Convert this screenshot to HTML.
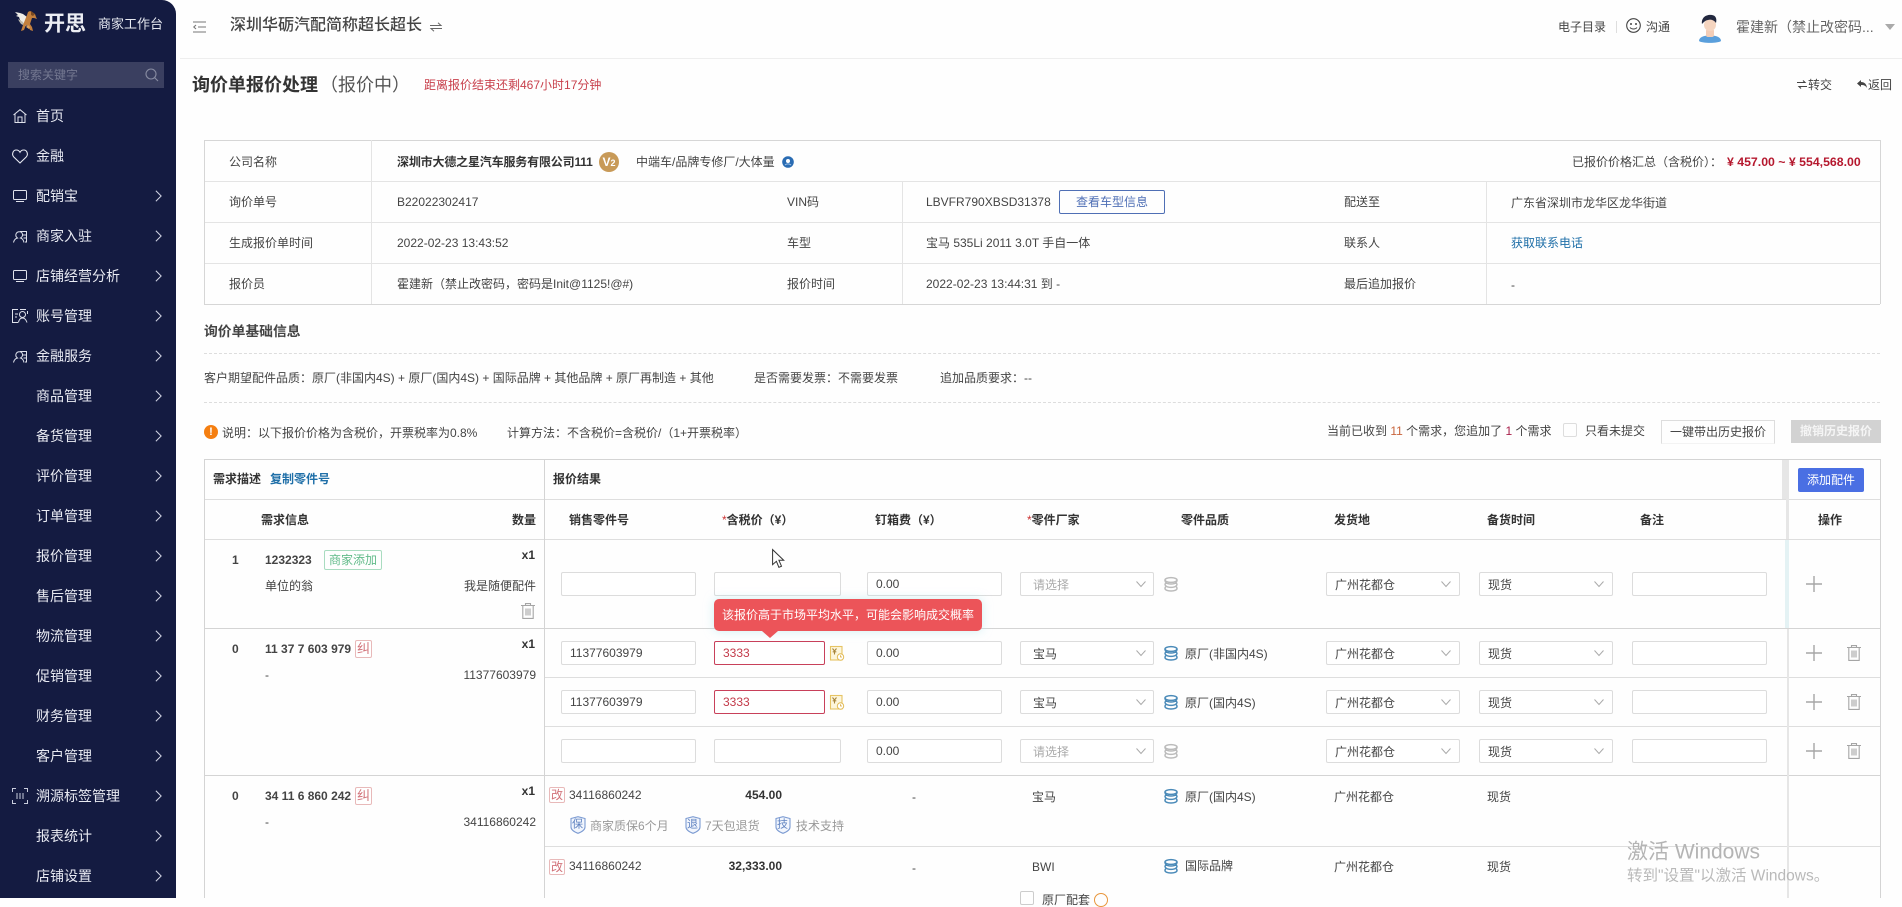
<!DOCTYPE html>
<html lang="zh-CN"><head><meta charset="utf-8"><title>询价单报价处理</title>
<style>
html,body{margin:0;padding:0;width:1902px;height:898px;overflow:hidden;background:#fefefe;font-family:"Liberation Sans","Noto Sans CJK SC",sans-serif;font-size:12px;color:#444}
.t{position:absolute;line-height:1;white-space:nowrap;transform:translateY(-50%)}
.b{font-weight:700;color:#333}
.h{position:absolute;height:1px;background:#dedede}
.v{position:absolute;width:1px;background:#dedede}
.i{position:absolute;box-sizing:border-box;height:24px;border:1px solid #dcdcdc;border-radius:2px;background:#fff}
.r{border-color:#c8405a;width:111px}
.m{position:absolute;left:36px;font-size:14px;line-height:1;color:#e8eaf2;transform:translateY(-50%);white-space:nowrap}
svg{position:absolute;overflow:visible}
.tg{position:absolute;box-sizing:border-box;border:1px solid #e8b9b9;color:#d2737a;border-radius:2px;text-align:center;font-size:13px;line-height:16px;width:17px;height:18px;background:#fff}
.th{font-weight:700;color:#333}
.s{color:#c33a4a}
</style></head><body>
<svg width="0" height="0" style="position:absolute"><defs>
<symbol id="ch" viewBox="0 0 8 14" overflow="visible"><path d="M1 1l6 6-6 6" fill="none" stroke="#cfd2e2" stroke-width="1.2"/></symbol>
<symbol id="dn" viewBox="0 0 10 6" overflow="visible"><path d="M.5.5L5 5.5 9.500.5" fill="none" stroke="#aaa" stroke-width="1"/></symbol>
<symbol id="db" viewBox="0 0 14 15" overflow="visible"><g fill="none" stroke-width="1.500"><ellipse cx="7" cy="3" rx="6" ry="2.400"/><path d="M1 3c0 .9.3 2 1.200 2.800C1.300 6.500 1 7 1 7.500s.3 1 1.200 1.700C1.300 9.900 1 10.500 1 11.500 1 13 3.700 14 7 14s6-1 6-2.500c0-1-.3-1.600-1.200-2.300.9-.7 1.200-1.200 1.200-1.700s-.3-1-1.200-1.700C12.700 5 13 3.900 13 3M2.200 5.800C3.300 6.600 5 7 7 7s3.700-.4 4.800-1.200M2.200 9.200C3.300 10 5 10.400 7 10.400s3.700-.4 4.800-1.200"/></g></symbol>
<symbol id="pl" viewBox="0 0 16 16" overflow="visible"><path d="M8 0v16M0 8h16" stroke="#a5a5a5" stroke-width="1.400" fill="none"/></symbol>
<symbol id="tr" viewBox="0 0 14 16" overflow="visible"><path d="M0 2.500h14M4.500 2.500V.6h5v1.900M1.800 2.500V15.400h10.400V2.500M5 5.500v7M7 5.500v7M9 5.500v7" fill="none" stroke="#a5a5a5" stroke-width="1.100"/></symbol>
<symbol id="yn" viewBox="0 0 14 15" overflow="visible"><rect x=".5" y=".5" width="11.500" height="13.500" fill="#fdf6dc" stroke="#e6c464" stroke-width="1.100"/><path d="M2.500 2.500l2 2.500 2-2.500M4.500 5v3.500M2.700 5.800h3.600" fill="none" stroke="#a8853a" stroke-width="1.100"/><circle cx="10.500" cy="11" r="3.200" fill="#fff" stroke="#e3bc55"/><path d="M10.500 9.200V11h1.500" fill="none" stroke="#d9a93c" stroke-width=".8"/></symbol>
<symbol id="sh" viewBox="0 0 16 18" overflow="visible"><path d="M1 2.500L8 .7l7 1.800v8.500c0 3-3.500 5-7 6.300-3.500-1.300-7-3.300-7-6.300z" fill="#f2f6fd" stroke="#7c9bd2" stroke-width="1.100"/></symbol>
<symbol id="pp" viewBox="0 0 14 13" overflow="visible"><path d="M.5 12.500C1 10 2.500 8.500 4.500 8 3 7 2.500 5.500 3 4c.5-1.500 2-2.300 3.500-2.300S9.300 2.800 9.500 4.300C9.700 6 9 7.200 7.500 8c1.600.5 3 1.800 3.500 4.500M7 1.500h6.500v10.500h-1.500M10 5h3M10.500 8h3" fill="none" stroke="#dfe2ec" stroke-width="1"/></symbol>
</defs></svg>

<!-- SIDEBAR -->
<div style="position:absolute;left:0;top:0;width:176px;height:898px;background:#141b41;border-top-right-radius:14px"></div>
<svg style="left:14px;top:10px" width="24" height="27" viewBox="0 0 24 27">
<path d="M1 2l5 1 3 1 4 3 1 6-2 3-4-4-2-2-1-3-3-1 2-1z" fill="#f0eee8"/><path d="M4 9l5 3 2 4-4-2-2-3z" fill="#bdb9ae"/>
<path d="M16 1l2 1 3 2 1 3 1 2-3-1-2 0-1 3-1 3 2 3 1 4-3-1-2-4-2-1-2 5-3 1 2-6 2-5 2-5 1-3z" fill="#c4803d"/><path d="M17 1l4 3-2 2-2-1z" fill="#7a4a22"/><path d="M14 15l2 2-1 2-3-2z" fill="#e0a45e"/>
</svg>
<div class="t" style="left:44px;top:24px;font-size:21px;font-weight:700;color:#eceef4">开思</div>
<div class="t" style="left:98px;top:23.500px;font-size:13px;color:#e6e8f0">商家工作台</div>
<div style="position:absolute;left:8px;top:62px;width:156px;height:26px;background:#3a3f60"></div>
<div class="t" style="left:18px;top:75px;color:#747891">搜索关键字</div>
<svg style="left:145px;top:68px" width="14" height="14" viewBox="0 0 14 14"><circle cx="6" cy="6" r="5" fill="none" stroke="#888ca2" stroke-width="1.100"/><path d="M9.500 9.500L13 13" stroke="#888ca2" stroke-width="1.100"/></svg>

<div class="m" style="top:116px">首页</div>
<svg style="left:13px;top:109px" width="14" height="14" viewBox="0 0 14 14"><path d="M.5 6L7 .7 13.500 6M2 5v8.500h10V5M5 13.500V8h4v5.500" fill="none" stroke="#dfe2ec"/></svg>
<div class="m" style="top:156px">金融</div>
<svg style="left:12px;top:149px" width="16" height="15" viewBox="0 0 16 15"><path d="M8 14L1.800 8C-.5 5.600.8 1 4.300 1 6 1 7.300 2 8 3.300 8.700 2 10 1 11.700 1c3.500 0 4.800 4.600 2.500 7z" fill="none" stroke="#e6e8f0" stroke-width="1.100"/></svg>
<div class="m" style="top:196px">配销宝</div>
<svg style="left:13px;top:190px" width="14" height="12" viewBox="0 0 14 12"><rect x=".5" y=".5" width="13" height="9" rx="1" fill="none" stroke="#dfe2ec"/><path d="M3 11.500h8" stroke="#dfe2ec"/></svg>
<div class="m" style="top:236px">商家入驻</div>
<svg style="left:13px;top:230px" width="14" height="13"><use href="#pp" width="14" height="13"/></svg>
<div class="m" style="top:276px">店铺经营分析</div>
<svg style="left:13px;top:270px" width="14" height="12" viewBox="0 0 14 12"><rect x=".5" y=".5" width="13" height="9" rx="1" fill="none" stroke="#dfe2ec"/><path d="M3 11.500h8" stroke="#dfe2ec"/></svg>
<div class="m" style="top:316px">账号管理</div>
<svg style="left:12px;top:309px" width="16" height="14" viewBox="0 0 16 14"><path d="M6 .5H.5v13H6M3 5h3M3 8h2" fill="none" stroke="#dfe2ec"/><path d="M14 .5H8M15.500 2v3" fill="none" stroke="#dfe2ec"/><circle cx="10.500" cy="5.500" r="3" fill="none" stroke="#dfe2ec"/><path d="M6.500 13.500c.5-3 2-4.500 4-4.500s3.500 1.500 4.500 4.500" fill="none" stroke="#dfe2ec"/></svg>
<div class="m" style="top:356px">金融服务</div>
<svg style="left:13px;top:350px" width="14" height="13"><use href="#pp" width="14" height="13"/></svg>
<div class="m" style="top:396px">商品管理</div>
<div class="m" style="top:436px">备货管理</div>
<div class="m" style="top:476px">评价管理</div>
<div class="m" style="top:516px">订单管理</div>
<div class="m" style="top:556px">报价管理</div>
<div class="m" style="top:596px">售后管理</div>
<div class="m" style="top:636px">物流管理</div>
<div class="m" style="top:676px">促销管理</div>
<div class="m" style="top:716px">财务管理</div>
<div class="m" style="top:756px">客户管理</div>
<div class="m" style="top:796px">溯源标签管理</div>
<svg style="left:12px;top:788px" width="16" height="16" viewBox="0 0 16 16"><path d="M4 .5H.5V4M12 .5h3.500V4M.5 12v3.500H4M15.500 12v3.500H12M5 5v6M8 5v6M11 5v6" fill="none" stroke="#c9cddd"/></svg>
<div class="m" style="top:836px">报表统计</div>
<div class="m" style="top:876px">店铺设置</div>
<svg style="left:155px;top:189px" width="7" height="14"><use href="#ch" width="7" height="14"/></svg>
<svg style="left:155px;top:229px" width="7" height="14"><use href="#ch" width="7" height="14"/></svg>
<svg style="left:155px;top:269px" width="7" height="14"><use href="#ch" width="7" height="14"/></svg>
<svg style="left:155px;top:309px" width="7" height="14"><use href="#ch" width="7" height="14"/></svg>
<svg style="left:155px;top:349px" width="7" height="14"><use href="#ch" width="7" height="14"/></svg>
<svg style="left:155px;top:389px" width="7" height="14"><use href="#ch" width="7" height="14"/></svg>
<svg style="left:155px;top:429px" width="7" height="14"><use href="#ch" width="7" height="14"/></svg>
<svg style="left:155px;top:469px" width="7" height="14"><use href="#ch" width="7" height="14"/></svg>
<svg style="left:155px;top:509px" width="7" height="14"><use href="#ch" width="7" height="14"/></svg>
<svg style="left:155px;top:549px" width="7" height="14"><use href="#ch" width="7" height="14"/></svg>
<svg style="left:155px;top:589px" width="7" height="14"><use href="#ch" width="7" height="14"/></svg>
<svg style="left:155px;top:629px" width="7" height="14"><use href="#ch" width="7" height="14"/></svg>
<svg style="left:155px;top:669px" width="7" height="14"><use href="#ch" width="7" height="14"/></svg>
<svg style="left:155px;top:709px" width="7" height="14"><use href="#ch" width="7" height="14"/></svg>
<svg style="left:155px;top:749px" width="7" height="14"><use href="#ch" width="7" height="14"/></svg>
<svg style="left:155px;top:789px" width="7" height="14"><use href="#ch" width="7" height="14"/></svg>
<svg style="left:155px;top:829px" width="7" height="14"><use href="#ch" width="7" height="14"/></svg>
<svg style="left:155px;top:869px" width="7" height="14"><use href="#ch" width="7" height="14"/></svg>

<!-- TOP BAR -->
<div class="h" style="left:180px;top:58px;width:1722px;background:#eee"></div>
<svg style="left:193px;top:21px" width="13" height="12" viewBox="0 0 13 12"><path d="M0 1h13M5 6h8M0 11h13M3 4L0.800 6 3 8" fill="none" stroke="#777" stroke-width="1.100"/></svg>
<div class="t" style="left:230px;top:26px;font-size:16px;font-weight:500;color:#444">深圳华砺汽配简称超长超长</div>
<svg style="left:430px;top:22px" width="12" height="10" viewBox="0 0 12 10"><path d="M0 3.500h11L8 .8M12 6.500H1L4 9.200" fill="none" stroke="#666"/></svg>
<div class="t" style="left:1558px;top:27px;color:#444">电子目录</div>
<div class="v" style="left:1616px;top:21px;height:12px"></div>
<svg style="left:1626px;top:18px" width="15" height="15" viewBox="0 0 15 15"><circle cx="7.500" cy="7.500" r="6.800" fill="none" stroke="#444" stroke-width="1.100"/><circle cx="5" cy="6" r="1" fill="#444"/><circle cx="10" cy="6" r="1" fill="#444"/><path d="M4 9.500c1.500 2 5.500 2 7 0" fill="none" stroke="#444"/></svg>
<div class="t" style="left:1646px;top:27px;color:#444">沟通</div>
<svg style="left:1698px;top:14px" width="24" height="30" viewBox="0 0 24 30"><path d="M1 27c0-4 5-5.500 11-5.500S23 23 23 27c-3 2.500-19 2.500-22 0z" fill="#5a9fdc"/><rect x="8" y="15" width="8" height="8" rx="2" fill="#f3cdb7"/><circle cx="12" cy="11" r="6" fill="#f5d5c0"/><path d="M4 10C3 3 9 0 14 1c4 .5 5 4 4 8-2-3-5-4-8-3-3 .5-4 2-6 4z" fill="#22283f"/></svg>
<div class="t" style="left:1736px;top:27px;font-size:14px;color:#666">霍建新（禁止改密码...</div>
<div style="position:absolute;left:1885px;top:24px;width:0;height:0;border:5px solid transparent;border-top:6px solid #aaa"></div>

<!-- TITLE -->
<div class="t" style="left:192px;top:85px;font-size:18px;font-weight:700;color:#333">询价单报价处理</div>
<div class="t" style="left:320px;top:85px;font-size:18px;color:#555">（报价中）</div>
<div class="t" style="left:424px;top:85px;color:#c8404c">距离报价结束还剩467小时17分钟</div>
<svg style="left:1797px;top:80px" width="10" height="9" viewBox="0 0 10 9"><path d="M0 2.500h8L6 .5M10 6.500H2L4 8.500" fill="none" stroke="#444" stroke-width="1.100"/></svg>
<div class="t" style="left:1808px;top:85px;color:#444">转交</div>
<svg style="left:1857px;top:80px" width="10" height="9" viewBox="0 0 10 9"><path d="M4 0L0 3.500 4 7V5c3 0 4.500.5 6 3C9.500 4 7.500 2 4 2z" fill="#444"/></svg>
<div class="t" style="left:1868px;top:85px;color:#444">返回</div>

<!-- INFO TABLE -->
<div class="h" style="left:204px;top:140px;width:1676px;background:#d6d6d6"></div>
<div class="h" style="left:204px;top:181px;width:1676px;background:#e4e4e4"></div>
<div class="h" style="left:204px;top:222px;width:1676px;background:#e4e4e4"></div>
<div class="h" style="left:204px;top:263px;width:1676px;background:#e4e4e4"></div>
<div class="h" style="left:204px;top:304px;width:1676px;background:#d6d6d6"></div>
<div class="v" style="left:204px;top:140px;height:164px;background:#d6d6d6"></div>
<div class="v" style="left:1880px;top:140px;height:164px;background:#d6d6d6"></div>
<div class="v" style="left:371px;top:140px;height:164px;background:#e4e4e4"></div>
<div class="v" style="left:902px;top:181px;height:123px;background:#e4e4e4"></div>
<div class="v" style="left:1486px;top:181px;height:123px;background:#e4e4e4"></div>

<div class="t" style="left:229px;top:161.500px">公司名称</div>
<div class="t b" style="left:397px;top:161.500px;letter-spacing:-.17px">深圳市大德之星汽车服务有限公司111</div>
<div style="position:absolute;left:599px;top:152px;width:20px;height:20px;border-radius:50%;background:#c89a58;color:#fff;text-align:center;font:700 12px/20px 'Liberation Sans',sans-serif">V<span style="font-size:9px">2</span></div>
<div class="t" style="left:636px;top:162px">中端车/品牌专修厂/大体量</div>
<svg style="left:782px;top:156px" width="12" height="12" viewBox="0 0 12 12"><circle cx="6" cy="6" r="5.800" fill="#2a6cb3"/><circle cx="6" cy="5" r="2" fill="#fff"/><path d="M3 9c1.500-1.500 4.500-1.500 6 0" stroke="#9fc4ea" fill="none"/></svg>
<div class="t" style="left:1572px;top:161.500px">已报价价格汇总（含税价）：</div>
<div class="t" style="left:1727px;top:161.500px;font-weight:700;color:#b5182e;font-size:12.300px">¥ 457.00 ~ ¥ 554,568.00</div>

<div class="t" style="left:229px;top:202px">询价单号</div>
<div class="t" style="left:397px;top:202px">B22022302417</div>
<div class="t" style="left:787px;top:202px">VIN码</div>
<div class="t" style="left:926px;top:202px">LBVFR790XBSD31378</div>
<div style="position:absolute;box-sizing:border-box;left:1059px;top:190px;width:106px;height:24px;border:1px solid #4f6fb5;border-radius:2px;text-align:center;line-height:22px;color:#4f6fb5">查看车型信息</div>
<div class="t" style="left:1344px;top:202px">配送至</div>
<div class="t" style="left:1511px;top:202.500px">广东省深圳市龙华区龙华街道</div>

<div class="t" style="left:229px;top:243px">生成报价单时间</div>
<div class="t" style="left:397px;top:243px">2022-02-23 13:43:52</div>
<div class="t" style="left:787px;top:243px">车型</div>
<div class="t" style="left:926px;top:243px">宝马 535Li 2011 3.0T 手自一体</div>
<div class="t" style="left:1344px;top:243px">联系人</div>
<div class="t" style="left:1511px;top:243px;color:#1f6fa8">获取联系电话</div>

<div class="t" style="left:229px;top:284px">报价员</div>
<div class="t" style="left:397px;top:284px">霍建新（禁止改密码，密码是Init@1125!@#)</div>
<div class="t" style="left:787px;top:284px">报价时间</div>
<div class="t" style="left:926px;top:284px">2022-02-23 13:44:31 到 -</div>
<div class="t" style="left:1344px;top:284px">最后追加报价</div>
<div class="t" style="left:1511px;top:285px">-</div>

<!-- BASIC INFO -->
<div class="t" style="left:204px;top:332px;font-weight:700;color:#444;font-size:13.800px">询价单基础信息</div>
<div style="position:absolute;left:204px;top:353px;width:1676px;border-top:1px dashed #ddd"></div>
<div class="t" style="left:204px;top:378px">客户期望配件品质：原厂(非国内4S) + 原厂(国内4S) + 国际品牌 + 其他品牌 + 原厂再制造 + 其他</div>
<div class="t" style="left:754px;top:378px">是否需要发票：不需要发票</div>
<div class="t" style="left:940px;top:378px">追加品质要求：--</div>
<div style="position:absolute;left:204px;top:402px;width:1676px;border-top:1px dashed #ddd"></div>

<div style="position:absolute;left:204px;top:425px;width:14px;height:14px;border-radius:50%;background:#f57f11;color:#fff;text-align:center;font:700 11px/14px 'Liberation Sans',sans-serif">!</div>
<div class="t" style="left:222px;top:432.500px">说明：以下报价价格为含税价，开票税率为0.8%</div>
<div class="t" style="left:507px;top:432.500px">计算方法：不含税价=含税价/（1+开票税率）</div>
<div class="t" style="left:1327px;top:431px">当前已收到 <span style="color:#c8643c">11</span> 个需求，您追加了 <span style="color:#a81f4a">1</span> 个需求</div>
<div style="position:absolute;box-sizing:border-box;left:1563px;top:423px;width:14px;height:14px;border:1px solid #ddd;border-radius:2px"></div>
<div class="t" style="left:1585px;top:431px">只看未提交</div>
<div style="position:absolute;box-sizing:border-box;left:1661px;top:420px;width:114px;height:24px;border:1px solid #ddd;border-bottom-color:#f3f3f3;text-align:center;line-height:23px;color:#444">一键带出历史报价</div>
<div style="position:absolute;left:1791px;top:420px;width:90px;height:23px;background:#d2d2d2;text-align:center;line-height:23px;color:#f5f5f5;font-weight:700">撤销历史报价</div>

<!-- MAIN TABLE LINES -->
<div class="h" style="left:204px;top:459px;width:1677px;background:#d4d4d4"></div>
<div class="h" style="left:204px;top:499px;width:1677px"></div>
<div class="h" style="left:204px;top:539px;width:1677px"></div>
<div class="h" style="left:204px;top:628px;width:1677px;background:#d4d4d4"></div>
<div class="h" style="left:544px;top:677px;width:1337px"></div>
<div class="h" style="left:544px;top:726px;width:1337px"></div>
<div class="h" style="left:204px;top:775px;width:1677px;background:#d4d4d4"></div>
<div class="h" style="left:544px;top:846px;width:1337px"></div>
<div class="v" style="left:204px;top:459px;height:439px;background:#d4d4d4"></div>
<div class="v" style="left:544px;top:459px;height:439px;background:#d4d4d4"></div>
<div class="v" style="left:1880px;top:459px;height:439px;background:#d4d4d4"></div>
<div style="position:absolute;left:1782px;top:460px;width:7px;height:39px;background:#e6e6e6"></div>
<div style="position:absolute;left:1786px;top:499px;width:3px;height:40px;background:#e6e6e6"></div>
<div style="position:absolute;left:1785px;top:540px;width:4px;height:88px;background:#e4f2f4"></div>
<div style="position:absolute;left:1787px;top:629px;width:2px;height:269px;background:#e6e6e6"></div>

<!-- HEADERS -->
<div class="t th" style="left:213px;top:479px">需求描述</div>
<div class="t" style="left:270px;top:479px;color:#1f6fa8;font-weight:700">复制零件号</div>
<div class="t th" style="left:553px;top:479px">报价结果</div>
<div style="position:absolute;left:1798px;top:468px;width:66px;height:24px;background:#4a6fe3;border-radius:2px;color:#fff;text-align:center;line-height:24px;font-size:12px">添加配件</div>
<div class="t th" style="left:261px;top:519.500px">需求信息</div>
<div class="t th" style="left:512px;top:519.500px">数量</div>
<div class="t th" style="left:569px;top:519.500px">销售零件号</div>
<div class="t th" style="left:722px;top:519.500px"><span style="color:#c33;font-weight:400">*</span>含税价（¥）</div>
<div class="t th" style="left:875px;top:519.500px">钉箱费（¥）</div>
<div class="t th" style="left:1027px;top:519.500px"><span style="color:#c33;font-weight:400">*</span>零件厂家</div>
<div class="t th" style="left:1181px;top:519.500px">零件品质</div>
<div class="t th" style="left:1334px;top:519.500px">发货地</div>
<div class="t th" style="left:1487px;top:519.500px">备货时间</div>
<div class="t th" style="left:1640px;top:519.500px">备注</div>
<div class="t th" style="left:1818px;top:519.500px">操作</div>

<!-- LEFT ROWS -->
<div class="t b" style="left:232px;top:560px;color:#444">1</div>
<div class="t b" style="left:265px;top:560px;color:#444">1232323</div>
<div style="position:absolute;box-sizing:border-box;left:324px;top:550px;width:58px;height:20px;border:1px solid #a9dcc0;border-radius:2px;color:#62bb8a;text-align:center;line-height:19px">商家添加</div>
<div class="t b" style="right:1367px;top:555px">x1</div>
<div class="t" style="left:265px;top:586px">单位的翁</div>
<div class="t" style="right:1366px;top:586px">我是随便配件</div>
<svg style="left:521px;top:603px" width="14" height="16"><use href="#tr" width="14" height="16"/></svg>

<div class="t b" style="left:232px;top:649px;color:#444">0</div>
<div class="t b" style="left:265px;top:649px;color:#444">11 37 7 603 979</div>
<div class="tg" style="left:355px;top:640px">纠</div>
<div class="t b" style="right:1367px;top:644px">x1</div>
<div class="t" style="left:265px;top:675px">-</div>
<div class="t" style="right:1366px;top:675px">11377603979</div>

<div class="t b" style="left:232px;top:796px;color:#444">0</div>
<div class="t b" style="left:265px;top:796px;color:#444">34 11 6 860 242</div>
<div class="tg" style="left:355px;top:787px">纠</div>
<div class="t b" style="right:1367px;top:791px">x1</div>
<div class="t" style="left:265px;top:822px">-</div>
<div class="t" style="right:1366px;top:822px">34116860242</div>

<!-- INPUT ROW 1 -->
<div class="i" style="left:561px;top:572px;width:135px"></div>
<div class="i" style="left:714px;top:572px;width:127px"></div>
<div class="i" style="left:867px;top:572px;width:135px"></div><div class="t" style="left:876px;top:583.500px">0.00</div>
<div class="i" style="left:1020px;top:572px;width:134px"></div><div class="t" style="left:1033px;top:584.500px;color:#aaa">请选择</div>
<svg style="left:1136px;top:581px" width="10" height="6"><use href="#dn" width="10" height="6"/></svg>
<svg style="left:1164px;top:577px;stroke:#bbb" width="14" height="15"><use href="#db" width="14" height="15"/></svg>
<div class="i" style="left:1326px;top:572px;width:134px"></div><div class="t" style="left:1335px;top:584.500px">广州花都仓</div>
<svg style="left:1441px;top:581px" width="10" height="6"><use href="#dn" width="10" height="6"/></svg>
<div class="i" style="left:1479px;top:572px;width:134px"></div><div class="t" style="left:1488px;top:584.500px">现货</div>
<svg style="left:1594px;top:581px" width="10" height="6"><use href="#dn" width="10" height="6"/></svg>
<div class="i" style="left:1632px;top:572px;width:135px"></div>
<svg style="left:1806px;top:576px" width="16" height="16"><use href="#pl" width="16" height="16"/></svg>

<!-- INPUT ROW 2 -->
<div class="i" style="left:561px;top:641px;width:135px"></div><div class="t" style="left:570px;top:652.500px">11377603979</div>
<div class="i r" style="left:714px;top:641px"></div><div class="t s" style="left:723px;top:652.500px">3333</div>
<svg style="left:830px;top:646px" width="14" height="15"><use href="#yn" width="14" height="15"/></svg>
<div class="i" style="left:867px;top:641px;width:135px"></div><div class="t" style="left:876px;top:652.500px">0.00</div>
<div class="i" style="left:1020px;top:641px;width:134px"></div><div class="t" style="left:1033px;top:653.500px">宝马</div>
<svg style="left:1136px;top:650px" width="10" height="6"><use href="#dn" width="10" height="6"/></svg>
<svg style="left:1164px;top:646px;stroke:#4a8ab8" width="14" height="15"><use href="#db" width="14" height="15"/></svg>
<div class="t" style="left:1185px;top:653.500px">原厂(非国内4S)</div>
<div class="i" style="left:1326px;top:641px;width:134px"></div><div class="t" style="left:1335px;top:653.500px">广州花都仓</div>
<svg style="left:1441px;top:650px" width="10" height="6"><use href="#dn" width="10" height="6"/></svg>
<div class="i" style="left:1479px;top:641px;width:134px"></div><div class="t" style="left:1488px;top:653.500px">现货</div>
<svg style="left:1594px;top:650px" width="10" height="6"><use href="#dn" width="10" height="6"/></svg>
<div class="i" style="left:1632px;top:641px;width:135px"></div>
<svg style="left:1806px;top:645px" width="16" height="16"><use href="#pl" width="16" height="16"/></svg>
<svg style="left:1847px;top:645px" width="14" height="16"><use href="#tr" width="14" height="16"/></svg>

<!-- INPUT ROW 3 -->
<div class="i" style="left:561px;top:690px;width:135px"></div><div class="t" style="left:570px;top:701.500px">11377603979</div>
<div class="i r" style="left:714px;top:690px"></div><div class="t s" style="left:723px;top:701.500px">3333</div>
<svg style="left:830px;top:695px" width="14" height="15"><use href="#yn" width="14" height="15"/></svg>
<div class="i" style="left:867px;top:690px;width:135px"></div><div class="t" style="left:876px;top:701.500px">0.00</div>
<div class="i" style="left:1020px;top:690px;width:134px"></div><div class="t" style="left:1033px;top:702.500px">宝马</div>
<svg style="left:1136px;top:699px" width="10" height="6"><use href="#dn" width="10" height="6"/></svg>
<svg style="left:1164px;top:695px;stroke:#4a8ab8" width="14" height="15"><use href="#db" width="14" height="15"/></svg>
<div class="t" style="left:1185px;top:702.500px">原厂(国内4S)</div>
<div class="i" style="left:1326px;top:690px;width:134px"></div><div class="t" style="left:1335px;top:702.500px">广州花都仓</div>
<svg style="left:1441px;top:699px" width="10" height="6"><use href="#dn" width="10" height="6"/></svg>
<div class="i" style="left:1479px;top:690px;width:134px"></div><div class="t" style="left:1488px;top:702.500px">现货</div>
<svg style="left:1594px;top:699px" width="10" height="6"><use href="#dn" width="10" height="6"/></svg>
<div class="i" style="left:1632px;top:690px;width:135px"></div>
<svg style="left:1806px;top:694px" width="16" height="16"><use href="#pl" width="16" height="16"/></svg>
<svg style="left:1847px;top:694px" width="14" height="16"><use href="#tr" width="14" height="16"/></svg>

<!-- INPUT ROW 4 -->
<div class="i" style="left:561px;top:739px;width:135px"></div>
<div class="i" style="left:714px;top:739px;width:127px"></div>
<div class="i" style="left:867px;top:739px;width:135px"></div><div class="t" style="left:876px;top:750.500px">0.00</div>
<div class="i" style="left:1020px;top:739px;width:134px"></div><div class="t" style="left:1033px;top:751.500px;color:#aaa">请选择</div>
<svg style="left:1136px;top:748px" width="10" height="6"><use href="#dn" width="10" height="6"/></svg>
<svg style="left:1164px;top:744px;stroke:#bbb" width="14" height="15"><use href="#db" width="14" height="15"/></svg>
<div class="i" style="left:1326px;top:739px;width:134px"></div><div class="t" style="left:1335px;top:751.500px">广州花都仓</div>
<svg style="left:1441px;top:748px" width="10" height="6"><use href="#dn" width="10" height="6"/></svg>
<div class="i" style="left:1479px;top:739px;width:134px"></div><div class="t" style="left:1488px;top:751.500px">现货</div>
<svg style="left:1594px;top:748px" width="10" height="6"><use href="#dn" width="10" height="6"/></svg>
<div class="i" style="left:1632px;top:739px;width:135px"></div>
<svg style="left:1806px;top:743px" width="16" height="16"><use href="#pl" width="16" height="16"/></svg>
<svg style="left:1847px;top:743px" width="14" height="16"><use href="#tr" width="14" height="16"/></svg>

<!-- TOOLTIP -->
<div style="position:absolute;left:714px;top:599px;width:268px;height:32px;background:#ec5459;border-radius:5px;box-shadow:0 0 10px rgba(170,228,235,.55);color:#fff;line-height:32px;text-align:center;font-size:12px">该报价高于市场平均水平，可能会影响成交概率</div>
<div style="position:absolute;left:762px;top:631px;width:0;height:0;border-left:8px solid transparent;border-right:8px solid transparent;border-top:7px solid #ec5459"></div>

<!-- CURSOR -->
<svg style="left:772px;top:549px" width="13" height="20" viewBox="0 0 13 20"><path d="M.6.6v15l3.800-3.300 2.500 6 2.600-1.100-2.600-5.900h4.800z" fill="#fff" stroke="#333"/></svg>

<!-- QUOTE ROWS -->
<div class="tg" style="left:549px;top:787px;width:16px;height:16px;line-height:14px;font-size:12px">改</div>
<div class="t" style="left:569px;top:795px">34116860242</div>
<div class="t b" style="right:1120px;top:795px">454.00</div>
<div class="t" style="left:912px;top:797px">-</div>
<div class="t" style="left:1032px;top:797px">宝马</div>
<svg style="left:1164px;top:789px;stroke:#4a8ab8" width="14" height="15"><use href="#db" width="14" height="15"/></svg>
<div class="t" style="left:1185px;top:796.500px">原厂(国内4S)</div>
<div class="t" style="left:1334px;top:797px">广州花都仓</div>
<div class="t" style="left:1487px;top:797px">现货</div>

<svg style="left:570px;top:816px" width="16" height="18"><use href="#sh" width="16" height="18"/></svg><div class="t" style="left:572px;top:824.500px;color:#5f82c0;font-size:11px">保</div>
<div class="t" style="left:590px;top:825.500px;color:#999">商家质保6个月</div>
<svg style="left:685px;top:816px" width="16" height="18"><use href="#sh" width="16" height="18"/></svg><div class="t" style="left:687px;top:824.500px;color:#5f82c0;font-size:11px">退</div>
<div class="t" style="left:705px;top:825.500px;color:#999">7天包退货</div>
<svg style="left:775px;top:816px" width="16" height="18"><use href="#sh" width="16" height="18"/></svg><div class="t" style="left:777px;top:824.500px;color:#5f82c0;font-size:11px">技</div>
<div class="t" style="left:796px;top:825.500px;color:#999">技术支持</div>

<div class="tg" style="left:549px;top:859px;width:16px;height:16px;line-height:14px;font-size:12px">改</div>
<div class="t" style="left:569px;top:866px">34116860242</div>
<div class="t b" style="right:1120px;top:866px">32,333.00</div>
<div class="t" style="left:912px;top:868px">-</div>
<div class="t" style="left:1032px;top:867px">BWI</div>
<svg style="left:1164px;top:859px;stroke:#4a8ab8" width="14" height="15"><use href="#db" width="14" height="15"/></svg>
<div class="t" style="left:1185px;top:866px">国际品牌</div>
<div class="t" style="left:1334px;top:867px">广州花都仓</div>
<div class="t" style="left:1487px;top:867px">现货</div>
<div style="position:absolute;box-sizing:border-box;left:1020px;top:891px;width:14px;height:14px;border:1px solid #ccc;border-radius:2px"></div>
<div class="t" style="left:1042px;top:900px;color:#444">原厂配套</div>
<div style="position:absolute;box-sizing:border-box;left:1094px;top:893px;width:14px;height:14px;border:1px solid #e8963c;border-radius:50%"></div>

<!-- WATERMARK -->
<div class="t" style="left:1627px;top:852px;font-size:21px;color:#b4b4b4">激活 Windows</div>
<div class="t" style="left:1627px;top:876px;font-size:15.500px;color:#b9b9b9">转到"设置"以激活 Windows。</div>
</body></html>
